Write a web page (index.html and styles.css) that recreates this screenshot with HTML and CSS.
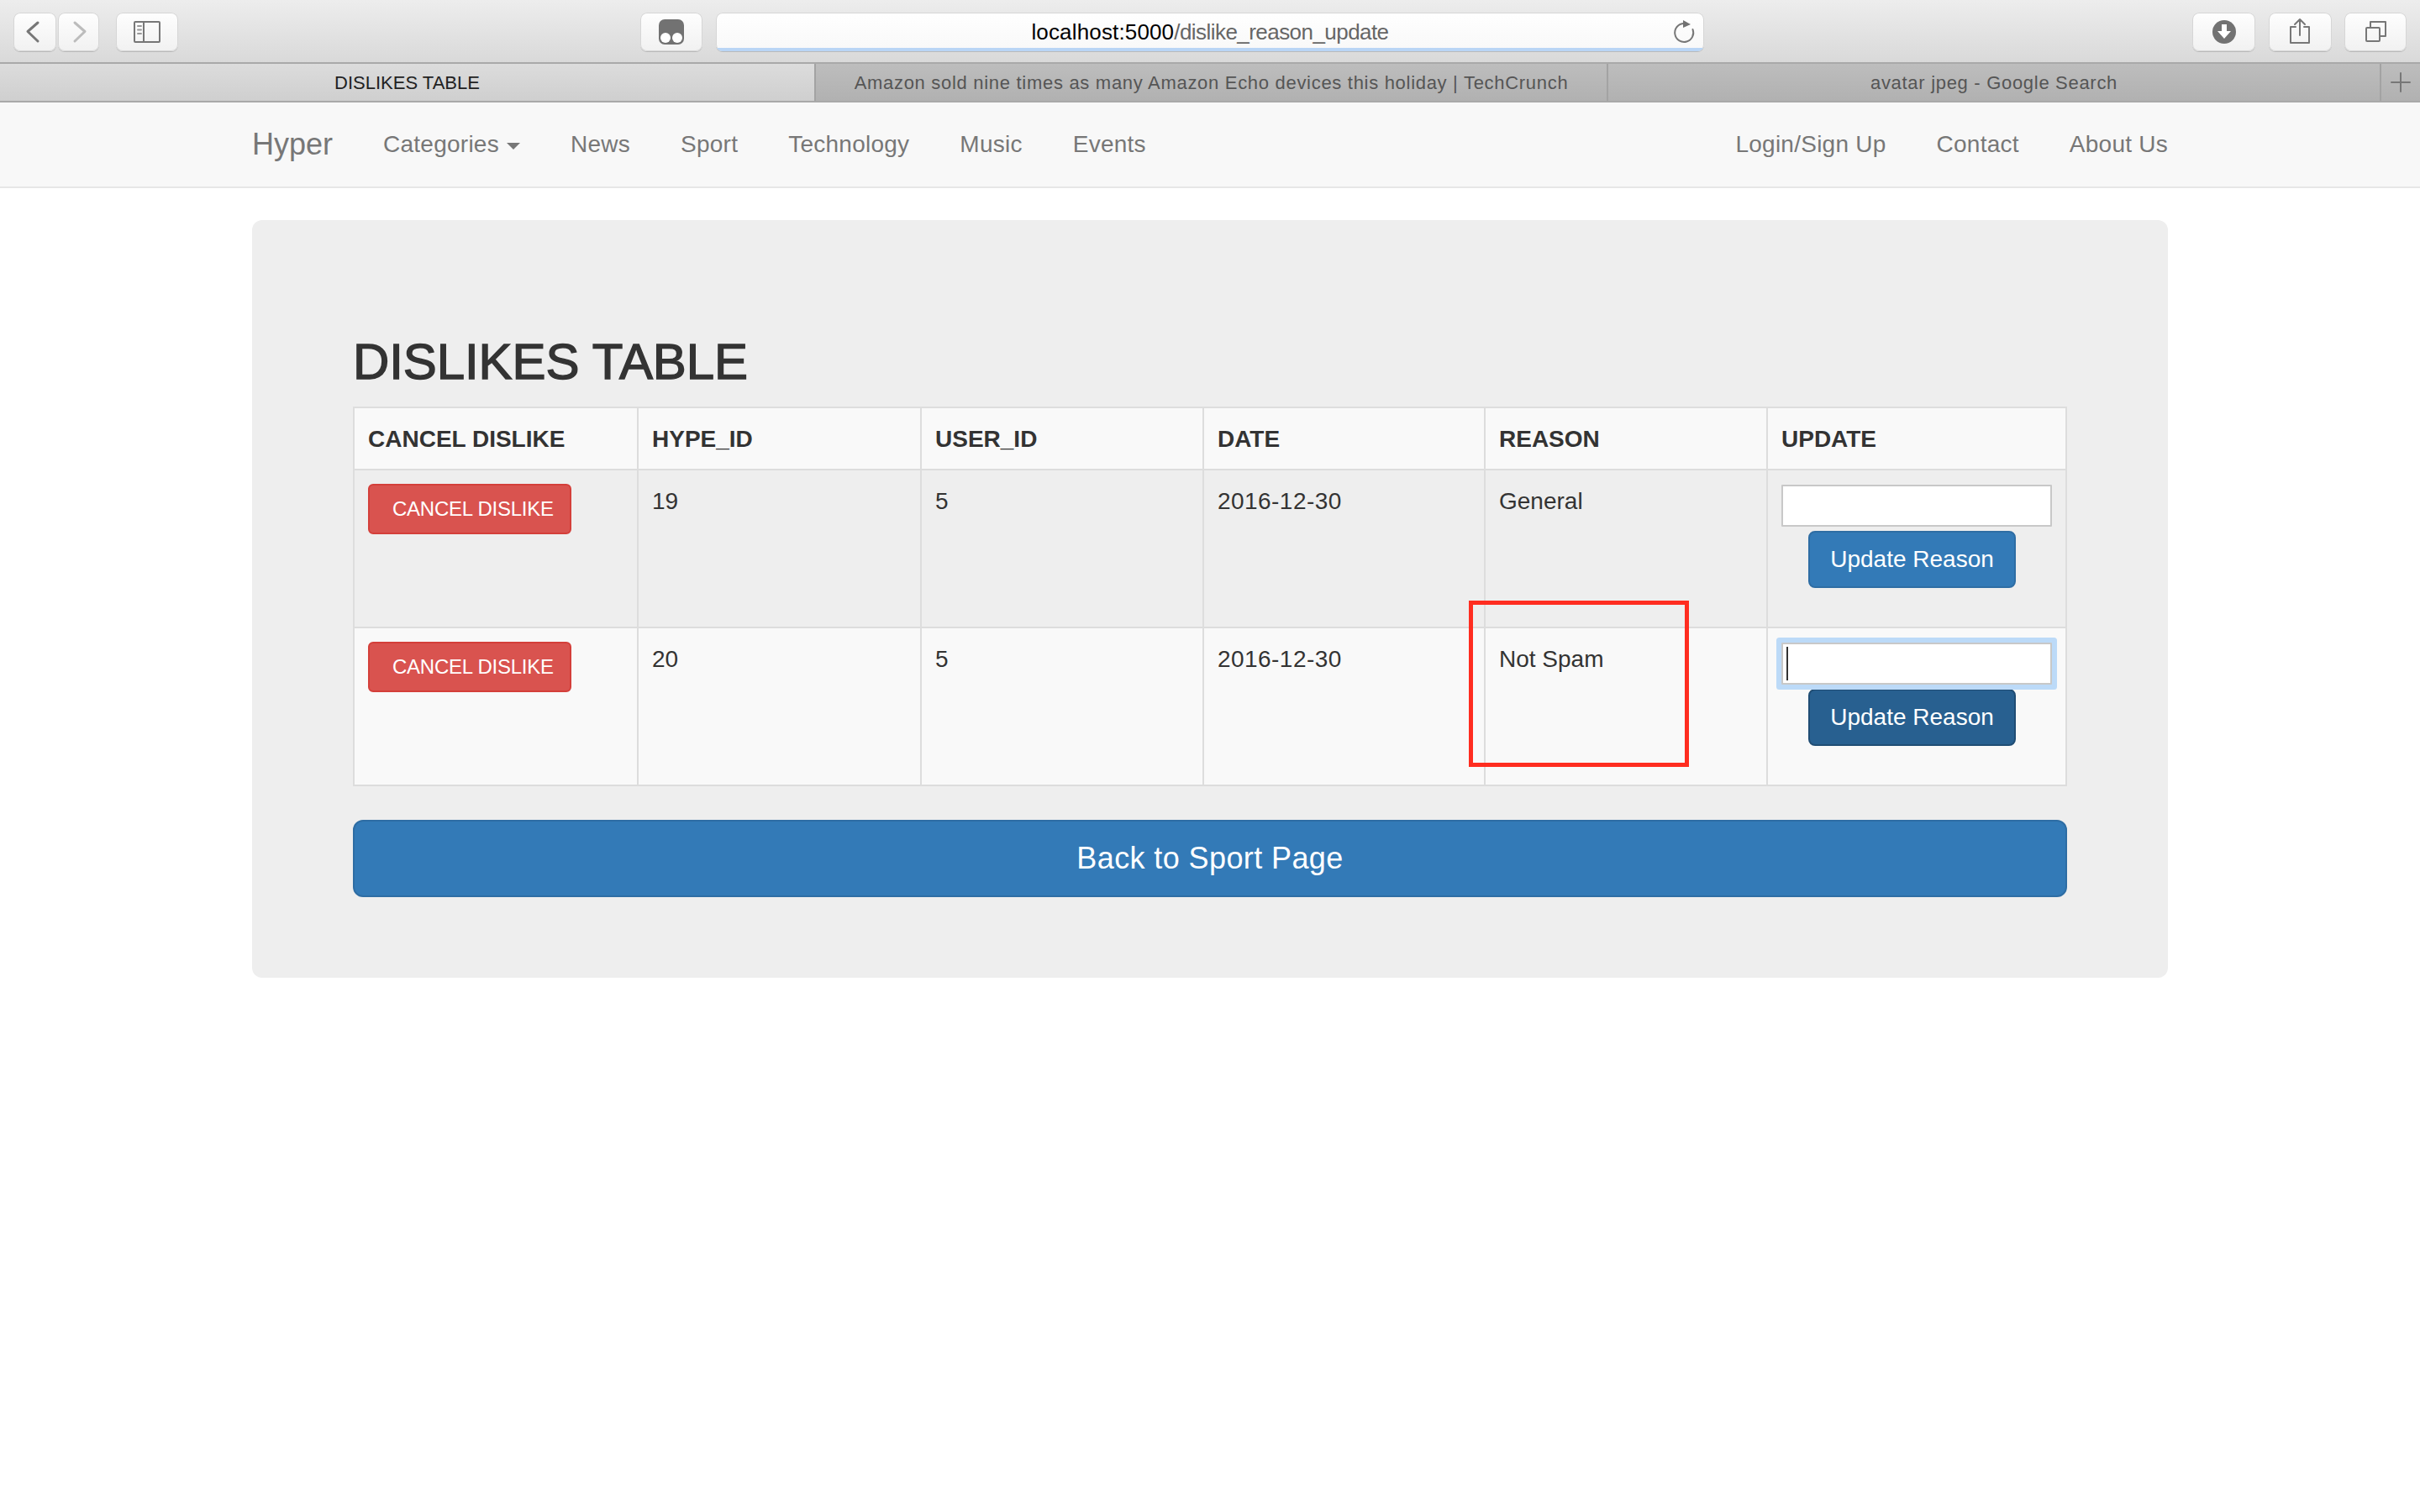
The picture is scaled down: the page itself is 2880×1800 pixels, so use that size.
FILE: index.html
```html
<!DOCTYPE html>
<html lang="en">
<head>
<meta charset="utf-8">
<title>DISLIKES TABLE</title>
<link rel="stylesheet" href="styles.css">
</head>
<body>
<header class="browser">
  <div class="toolbar">
    <div class="tool tool-back"><svg class="ico" viewBox="0 0 51 46"><path class="st" d="M29 12 17 22.500 29 34"/></svg></div>
    <div class="tool tool-forward"><svg class="ico" viewBox="0 0 49 46"><path class="st light" d="M20 12 32 22.500 20 34"/></svg></div>
    <div class="tool tool-sidebar"><svg class="ico" viewBox="0 0 74 46"><rect class="st thin" x="22" y="11" width="30" height="24" rx="1"/><path class="st thin" d="M33 11V35"/><path class="st dots" d="M26 16H30M26 20.500H30M26 25H30"/></svg></div>
    <div class="tool tool-reader"><svg class="ico" viewBox="0 0 74 46"><rect class="solid" x="22" y="8" width="30" height="30" rx="7"/><circle class="hole" cx="30" cy="30" r="6"/><circle class="hole" cx="44" cy="30" r="6"/></svg></div>
    <div class="address">
      <span class="url"><span class="host">localhost:5000</span>/dislike_reason_update</span>
      <svg class="reload" viewBox="0 0 32 32"><path class="st thin" d="M15 8A11 11 0 1 0 26.500 15"/><path class="solid" d="M15 4 24 9 15 13Z"/></svg>
      <span class="progress"></span>
    </div>
    <div class="tool tool-download"><svg class="ico" viewBox="0 0 75 46"><circle class="solid" cx="38" cy="23" r="14"/><path class="hole" d="M35 14H41V22H46L38 31 30 22H35Z"/></svg></div>
    <div class="tool tool-share"><svg class="ico" viewBox="0 0 75 46"><path class="st thin" d="M32 17H26V36H48V17H42M37 27V8M31 14 37 8 43 14"/></svg></div>
    <div class="tool tool-tabs"><svg class="ico" viewBox="0 0 74 46"><rect class="st thin" x="26" y="18" width="16" height="16" rx="1"/><path class="st thin" d="M31 17V11H49V28H43"/></svg></div>
  </div>
  <div class="tabstrip">
    <div class="tab tab-active">DISLIKES TABLE</div>
    <div class="tab tab-second">Amazon sold nine times as many Amazon Echo devices this holiday | TechCrunch</div>
    <div class="tab tab-third">avatar jpeg - Google Search</div>
    <div class="tab tab-new"><svg class="plus" viewBox="0 0 24 24"><path class="st thin" d="M12 1V23M1 12H23"/></svg></div>
  </div>
</header>

<nav class="navbar">
  <div class="container nav-inner">
    <a class="brand">Hyper</a>
    <a class="nav-link">Categories <span class="caret"></span></a>
    <a class="nav-link">News</a>
    <a class="nav-link">Sport</a>
    <a class="nav-link">Technology</a>
    <a class="nav-link">Music</a>
    <a class="nav-link">Events</a>
    <a class="nav-link nav-push">Login/Sign Up</a>
    <a class="nav-link">Contact</a>
    <a class="nav-link">About Us</a>
  </div>
</nav>

<main class="container jumbotron">
  <h2 class="title">DISLIKES TABLE</h2>
  <table class="dislikes">
    <colgroup>
      <col class="c1"><col class="c2"><col class="c3"><col class="c4"><col class="c5"><col class="c6">
    </colgroup>
    <thead>
      <tr>
        <th>CANCEL DISLIKE</th>
        <th>HYPE_ID</th>
        <th>USER_ID</th>
        <th>DATE</th>
        <th>REASON</th>
        <th>UPDATE</th>
      </tr>
    </thead>
    <tbody>
      <tr class="row-plain">
        <td><button class="btn-cancel" type="button">CANCEL DISLIKE</button></td>
        <td>19</td>
        <td>5</td>
        <td class="date">2016-12-30</td>
        <td>General</td>
        <td>
          <form class="update-form">
            <input class="reason-input" type="text">
            <button class="btn-update" type="button">Update Reason</button>
          </form>
        </td>
      </tr>
      <tr class="row-striped">
        <td><button class="btn-cancel" type="button">CANCEL DISLIKE</button></td>
        <td>20</td>
        <td>5</td>
        <td class="date">2016-12-30</td>
        <td>Not Spam</td>
        <td>
          <form class="update-form">
            <div class="field">
              <input class="reason-input is-focused" type="text">
              <span class="text-caret"></span>
            </div>
            <button class="btn-update is-active" type="button">Update Reason</button>
          </form>
        </td>
      </tr>
    </tbody>
  </table>
  <a class="btn-back">Back to Sport Page</a>
  <div class="annotation"></div>
</main>
</body>
</html>
```

FILE: styles.css
```css
* { box-sizing: border-box; }

html, body { margin: 0; padding: 0; background: #fff; }

body {
  font-family: "Liberation Sans", Arial, sans-serif;
  font-size: 28px;
  line-height: 40px;
  color: #333;
}

/* Browser chrome */
.toolbar {
  display: flex;
  align-items: flex-start;
  height: 74px;
  padding-top: 15px;
  background: linear-gradient(#ededed, #d9d9d9);
}

.tool {
  flex: none;
  height: 46px;
  border-radius: 8px;
  background: linear-gradient(#fefefe, #f1f1f1);
  box-shadow: inset 0 0 0 1px #d6d6d6, 0 1px 0 #b9b9b9;
}

.tool-back { width: 51px; margin-left: 16px; }
.tool-forward { width: 49px; margin-left: 2px; }
.tool-sidebar { width: 74px; margin-left: 20px; }
.tool-reader { width: 74px; margin-left: 550px; }
.tool-download { width: 75px; margin-left: 581px; }
.tool-share { width: 75px; margin-left: 16px; }
.tool-tabs { width: 74px; margin-left: 15px; }

.ico { display: block; width: 100%; height: 100%; }

.st { fill: none; stroke: #777; stroke-width: 3; stroke-linecap: round; stroke-linejoin: round; }
.st.light { stroke: #bcbcbc; }
.st.thin { stroke-width: 2; }
.st.dots { stroke-width: 2; stroke: #999; }
.solid { fill: #727272; }
.hole { fill: #fff; }

.address {
  position: relative;
  flex: none;
  display: flex;
  justify-content: center;
  width: 1176px;
  height: 46px;
  margin-left: 16px;
  overflow: hidden;
  border-radius: 8px;
  background: linear-gradient(#fff, #f8f8f8);
  box-shadow: inset 0 0 0 1px #d6d6d6, 0 1px 0 #b9b9b9;
}

.url {
  font-size: 26px;
  line-height: 47px;
  letter-spacing: -0.55px;
  color: #666;
}

.host { color: #000; letter-spacing: 0.15px; }

.reload {
  position: absolute;
  top: 5px;
  right: 8px;
  width: 32px;
  height: 32px;
}

.progress {
  position: absolute;
  left: 0;
  right: 0;
  bottom: 0;
  height: 4px;
  background: #b9d5f5;
}

.tabstrip {
  display: flex;
  height: 48px;
  border-top: 2px solid #a9a9a9;
  border-bottom: 2px solid #a9a9a9;
  background: linear-gradient(#bdbdbd, #b1b1b1);
}

.tab {
  flex: none;
  font-size: 22px;
  line-height: 46px;
  letter-spacing: 0.7px;
  text-align: center;
  color: #555;
  border-right: 2px solid #a3a3a3;
}

.tab-active { width: 971px; letter-spacing: 0; color: #222; background: linear-gradient(#dcdcdc, #cfcfcf); }
.tab-second { width: 943px; }
.tab-third { width: 920px; }
.tab-new { width: 46px; border-right: 0; }

.plus { display: block; width: 24px; height: 24px; margin: 10px 0 0 11px; }

/* Navbar */
.navbar {
  height: 102px;
  background: #f8f8f8;
  border-bottom: 2px solid #e7e7e7;
}

.container { width: 2280px; margin: 0 auto; }

.nav-inner { display: flex; }

.brand {
  padding: 30px 30px 30px 0;
  font-size: 36px;
  line-height: 40px;
  color: #777;
}

.nav-link {
  padding: 30px;
  letter-spacing: 0.25px;
  color: #777;
}

.nav-push { margin-left: auto; }
.nav-link:last-child { margin-right: -30px; }

.caret {
  display: inline-block;
  margin-left: 1px;
  vertical-align: middle;
  border-top: 8px solid #777;
  border-left: 8px solid transparent;
  border-right: 8px solid transparent;
}

/* Content */
.jumbotron {
  position: relative;
  margin-top: 38px;
  padding: 136px 120px 96px;
  border-radius: 12px;
  background: #eee;
}

.title {
  margin: 0 0 20px;
  font-size: 60px;
  line-height: 66px;
  font-weight: 400;
  letter-spacing: -0.1px;
  color: #333;
  -webkit-text-stroke: 1.4px #333;
}

.dislikes {
  width: 2040px;
  table-layout: fixed;
  border-collapse: collapse;
}

.c1 { width: 338px; }
.c2 { width: 337px; }
.c3 { width: 336px; }
.c4 { width: 335px; }
.c5 { width: 336px; }
.c6 { width: 356px; }

.dislikes th,
.dislikes td {
  padding: 17px 16px 15px;
  text-align: left;
  vertical-align: top;
  border: 2px solid #ddd;
}

.dislikes th { background: #f9f9f9; font-weight: 700; }
.dislikes .date { letter-spacing: 0.45px; }

.row-plain { height: 188px; }
.row-striped { height: 188px; background: #f9f9f9; }

.btn-cancel {
  display: block;
  width: 242px;
  height: 60px;
  margin-top: -1px;
  padding: 0 20px 0 27px;
  font: 24px/36px "Liberation Sans", Arial, sans-serif;
  letter-spacing: -0.25px;
  white-space: nowrap;
  color: #fff;
  background: #d9534f;
  border: 2px solid #d43f3a;
  border-radius: 6px;
}

.update-form {
  display: flex;
  flex-direction: column;
  align-items: flex-start;
}

.field { position: relative; }

.reason-input {
  display: block;
  width: 322px;
  height: 50px;
  margin: 0;
  padding: 0;
  background: #fff;
  border: 2px solid #c8c8c8;
  border-radius: 1px;
  outline: none;
}

.reason-input.is-focused { box-shadow: 0 0 0 6px #bcdaf8; }

.text-caret {
  position: absolute;
  top: 5px;
  left: 6px;
  width: 2px;
  height: 40px;
  background: #333;
}

.btn-update {
  display: block;
  width: 247px;
  height: 68px;
  margin: 5px 0 0 32px;
  padding: 0;
  font: 28px/40px "Liberation Sans", Arial, sans-serif;
  color: #fff;
  background: #337ab7;
  border: 2px solid #2e6da4;
  border-radius: 8px;
}

.btn-update.is-active { background: #286090; border-color: #204d74; }

.btn-back {
  display: block;
  height: 92px;
  margin-top: 40px;
  font-size: 36px;
  line-height: 88px;
  letter-spacing: 0.4px;
  text-align: center;
  color: #fff;
  background: #337ab7;
  border: 2px solid #2e6da4;
  border-radius: 12px;
}

.annotation {
  position: absolute;
  top: 453px;
  left: 1448px;
  width: 262px;
  height: 198px;
  border: 5px solid #ff2d20;
}
```
